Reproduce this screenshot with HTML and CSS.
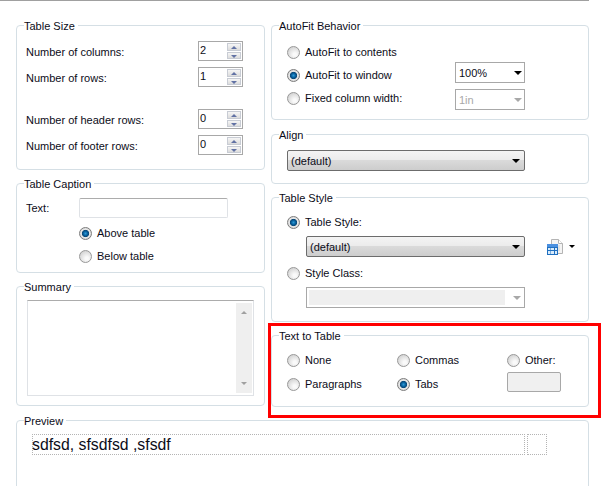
FILE: index.html
```html
<!DOCTYPE html>
<html lang="en">

<head>
    <meta charset="UTF-8">
    <meta name="viewport" content="width=device-width, initial-scale=1.0">
    <title>Table Properties</title>
    <link rel="stylesheet" href="styles.css">
</head>

<body>
    <div class="columns">
        <div class="col col-left">
            <fieldset class="group table-size">
                <legend>Table Size</legend>
                <div class="group-body">
                    <div class="row">
                        <label>Number of columns:</label>
                        <div class="spinner"><span>2</span><div class="spin"><i class="up"></i><i class="down"></i></div></div>
                    </div>
                    <div class="row">
                        <label>Number of rows:</label>
                        <div class="spinner"><span>1</span><div class="spin"><i class="up"></i><i class="down"></i></div></div>
                    </div>
                    <div class="row row-spaced">
                        <label>Number of header rows:</label>
                        <div class="spinner"><span>0</span><div class="spin"><i class="up"></i><i class="down"></i></div></div>
                    </div>
                    <div class="row">
                        <label>Number of footer rows:</label>
                        <div class="spinner"><span>0</span><div class="spin"><i class="up"></i><i class="down"></i></div></div>
                    </div>
                </div>
            </fieldset>

            <fieldset class="group table-caption">
                <legend>Table Caption</legend>
                <div class="group-body">
                    <div class="caption-text">
                        <label>Text:</label>
                        <div class="textbox"></div>
                    </div>
                    <div class="caption-radios">
                        <label class="choice"><i class="radio on"></i>Above table</label>
                        <label class="choice"><i class="radio"></i>Below table</label>
                    </div>
                </div>
            </fieldset>

            <fieldset class="group summary">
                <legend>Summary</legend>
                <div class="group-body">
                    <div class="textarea">
                        <div class="scrollbar"><i class="up"></i><i class="down"></i></div>
                    </div>
                </div>
            </fieldset>
        </div>

        <div class="col col-right">
            <fieldset class="group autofit">
                <legend>AutoFit Behavior</legend>
                <div class="group-body">
                    <label class="choice"><i class="radio"></i>AutoFit to contents</label>
                    <div class="autofit-row">
                        <label class="choice"><i class="radio on"></i>AutoFit to window</label>
                        <div class="select small percent"><span>100%</span><i class="arrow"></i></div>
                    </div>
                    <div class="autofit-row">
                        <label class="choice"><i class="radio"></i>Fixed column width:</label>
                        <div class="select small width disabled"><span>1in</span><i class="arrow"></i></div>
                    </div>
                </div>
            </fieldset>

            <fieldset class="group align">
                <legend>Align</legend>
                <div class="group-body">
                    <div class="select combo"><span>(default)</span><i class="arrow"></i></div>
                </div>
            </fieldset>

            <fieldset class="group table-style">
                <legend>Table Style</legend>
                <div class="group-body">
                    <label class="choice"><i class="radio on"></i>Table Style:</label>
                    <div class="style-row">
                        <div class="select combo"><span>(default)</span><i class="arrow"></i></div>
                        <svg class="style-icon" width="19" height="16" viewBox="0 0 19 16">
                            <path d="M5.500.5h7l4 4v10h-11z" fill="#f4f4f4" stroke="#b4b4b4" />
                            <path d="M12.500.5v4h4" fill="#fff" stroke="#b4b4b4" />
                            <path d="M8 7h6M8 9h6M8 11h6" stroke="#d0d0d0" />
                            <rect x="1" y="5" width="11" height="11" fill="#1f6fc0" />
                            <rect x="1" y="5" width="11" height="3" fill="#4a90e0" />
                            <path d="M2 9h2.500v2H2zM5 9h3v2H5zM9 9h2v2H9zM2 12h2.500v3H2zM5 12h3v3H5zM9 12h2v3H9z" fill="#d8ebfb" />
                        </svg>
                        <i class="arrow menu-arrow"></i>
                    </div>
                    <label class="choice"><i class="radio"></i>Style Class:</label>
                    <div class="style-row">
                        <div class="select small wide disabled"><span class="blank"></span><i class="arrow"></i></div>
                    </div>
                </div>
            </fieldset>

            <fieldset class="group text-to-table">
                <legend>Text to Table</legend>
                <div class="group-body">
                    <div class="ttt-grid">
                        <label class="choice"><i class="radio"></i>None</label>
                        <label class="choice"><i class="radio"></i>Commas</label>
                        <label class="choice"><i class="radio"></i>Other:</label>
                        <label class="choice"><i class="radio"></i>Paragraphs</label>
                        <label class="choice"><i class="radio on"></i>Tabs</label>
                        <div class="other-box"></div>
                    </div>
                </div>
            </fieldset>

            <div class="highlight"></div>
        </div>
    </div>

    <fieldset class="group preview">
        <legend>Preview</legend>
        <div class="group-body">
            <div class="preview-table">
                <div class="cell cell-main">sdfsd, sfsdfsd ,sfsdf</div>
                <div class="cell cell-side"></div>
            </div>
        </div>
    </fieldset>
</body>

</html>
```

FILE: styles.css
```css
/* Table properties dialog */
body {
    margin: 0;
    height: 486px;
    overflow: hidden;
    background-color: #fff;
    font-family: "Liberation Sans", Arial, sans-serif;
    font-size: 11px;
    line-height: 14px;
    color: #0c0c18;
}

body::before {
    content: "";
    display: block;
    width: 589px;
    height: 1px;
    background-color: #a0a0a0;
}

i {
    display: block;
    font-style: normal;
}

.columns {
    display: flex;
    gap: 6px;
    padding: 17px 0 0 16px;
}

.col {
    display: flex;
    flex-direction: column;
    gap: 6px;
}

.col-left {
    width: 249px;
}

.col-right {
    position: relative;
    width: 318px;
}

/* Group boxes */
.group {
    margin: 0;
    padding: 0;
    min-width: 0;
    box-sizing: border-box;
    border: 1px solid #d5dfe5;
    border-radius: 4px;
}

.group legend {
    margin-left: 7px;
    padding: 2px 3px 0 0;
    line-height: 12px;
}

.table-size {
    height: 152px;
}

.table-size .group-body {
    padding: 9px 21px 0 9px;
}

.table-caption {
    height: 97px;
}

.table-caption .group-body {
    padding-top: 8px;
}

.summary {
    height: 127px;
}

.summary .group-body {
    padding: 7px 0 0 10px;
}

.autofit {
    height: 102px;
}

.autofit .group-body {
    padding: 13px 0 0 15px;
}

.align {
    height: 57px;
    margin-top: 1px;
}

.align .group-body {
    padding: 9px 0 0 15px;
}

.table-style {
    height: 132px;
}

.table-style .group-body {
    padding: 11px 0 0 15px;
}

.text-to-table {
    height: 79px;
}

.text-to-table .group-body {
    padding: 11px 0 0 15px;
}

.preview {
    height: 90px;
    width: 573px;
    margin: 6px 0 0 16px;
}

.preview .group-body {
    padding: 7px 0 0 15px;
}

/* Spinners */
.row {
    display: flex;
    justify-content: space-between;
    align-items: center;
    height: 20px;
    margin-bottom: 6px;
}

.row label {
    padding-top: 2px;
}

.row-spaced {
    margin-top: 22px;
}

.spinner {
    display: flex;
    justify-content: space-between;
    box-sizing: border-box;
    width: 45px;
    height: 20px;
    padding: 1px;
    border: 1px solid #a8a8a8;
}

.spin {
    display: flex;
    flex-direction: column;
    gap: 1px;
    width: 14px;
}

.spin i {
    position: relative;
    flex: 1;
    border: 1px solid #c8ccd4;
    background: linear-gradient(#f6f6f6, #dcdcdc);
}

.spin i::after {
    content: "";
    position: absolute;
    left: 3px;
    top: 2px;
    border-left: 3px solid transparent;
    border-right: 3px solid transparent;
}

.spin .up::after {
    border-bottom: 3px solid #6272a4;
}

.spin .down::after {
    border-top: 3px solid #6272a4;
}

/* Table caption */
.caption-text {
    display: flex;
    align-items: center;
    padding-left: 9px;
}

.caption-text label {
    width: 53px;
}

.textbox {
    box-sizing: border-box;
    width: 149px;
    height: 20px;
    border: 1px solid #dfe2e6;
    border-top-color: #acacac;
    border-radius: 2px;
}

.caption-radios {
    display: flex;
    flex-direction: column;
    gap: 9px;
    padding: 8px 0 0 62px;
}

/* Radios */
.choice {
    display: flex;
    align-items: center;
    gap: 5px;
    height: 14px;
}

.radio {
    flex: none;
    box-sizing: border-box;
    width: 13px;
    height: 13px;
    border: 1px solid #989898;
    border-radius: 50%;
    background: radial-gradient(circle at 62% 68%, #fafafa 15%, #cfcfcf 85%);
}

.radio.on {
    border-color: #7c7c7c;
    background: radial-gradient(circle at 50% 50%, #2a9ad8 0, #065a96 30%, #0a4a78 42%, #e8e8e8 52%, #c8c8c8 100%);
}

/* AutoFit */
.autofit-row {
    display: flex;
    justify-content: space-between;
    width: 238px;
    height: 14px;
    margin-top: 9px;
}

.select.percent {
    margin-top: -6px;
}

.select.width {
    margin-top: -2px;
}

/* Dropdowns */
.select {
    display: flex;
    align-items: center;
    justify-content: space-between;
    box-sizing: border-box;
    height: 21px;
    padding: 0 2px 0 3px;
}

.arrow {
    flex: none;
    border-left: 4px solid transparent;
    border-right: 4px solid transparent;
    border-top: 4px solid #000;
}

.select.small {
    width: 70px;
    border: 1px solid #a8a8a8;
    background-color: #fff;
}

.select.disabled {
    color: #a8a8a8;
}

.select.disabled .arrow {
    border-top-color: #a8a8a8;
}

.select.wide {
    width: 219px;
    padding: 2px 3px 2px 2px;
    align-items: stretch;
}

.select.wide .arrow {
    align-self: center;
}

.blank {
    width: 196px;
    background-color: #efefef;
}

.select.combo {
    width: 238px;
    padding: 0 4px 0 3px;
    border: 1px solid #6c6c6c;
    border-radius: 2px;
    background: linear-gradient(#f4f4f4 0, #ececec 45%, #dadada 50%, #cdcdcd 100%);
}

.table-style .select.combo {
    width: 219px;
}

/* Table style */
.style-row {
    display: flex;
    align-items: center;
    margin: 7px 0 9px 19px;
}

.style-icon {
    margin-left: 21px;
}

.menu-arrow {
    margin-left: 4px;
    border-left-width: 3px;
    border-right-width: 3px;
    border-top-width: 3px;
}

/* Text to table */
.ttt-grid {
    display: grid;
    grid-template-columns: 110px 110px 54px;
    grid-template-rows: 14px 14px;
    row-gap: 10px;
}

.other-box {
    box-sizing: border-box;
    height: 20px;
    margin-top: -5px;
    border: 1px solid #a8a8a8;
    border-radius: 2px;
    background-color: #f0f0f0;
}

/* Red callout drawn over the group */
.highlight {
    position: absolute;
    left: -3px;
    top: 305px;
    width: 333px;
    height: 95px;
    box-sizing: border-box;
    border: 3px solid #f00;
}

/* Summary */
.textarea {
    display: flex;
    justify-content: flex-end;
    box-sizing: border-box;
    width: 227px;
    height: 96px;
    padding: 2px 1px 2px 0;
    border: 1px solid #dfe2e6;
    border-top-color: #acacac;
}

.scrollbar {
    display: flex;
    flex-direction: column;
    justify-content: space-between;
    align-items: center;
    width: 16px;
    padding: 8px 0;
    box-sizing: border-box;
    background-color: #efefef;
}

.scrollbar i {
    border-left: 3px solid transparent;
    border-right: 3px solid transparent;
}

.scrollbar .up {
    border-bottom: 3px solid #a0a0a0;
}

.scrollbar .down {
    border-top: 3px solid #a0a0a0;
}

/* Preview */
.preview-table {
    display: flex;
    gap: 2px;
    width: 515px;
    height: 21px;
}

.cell {
    box-sizing: border-box;
    border: 1px dotted #b4b4b4;
}

.cell-main {
    flex: 1;
    font-size: 15.8px;
    line-height: 19px;
    text-indent: -1px;
}

.cell-side {
    width: 20px;
}
```
